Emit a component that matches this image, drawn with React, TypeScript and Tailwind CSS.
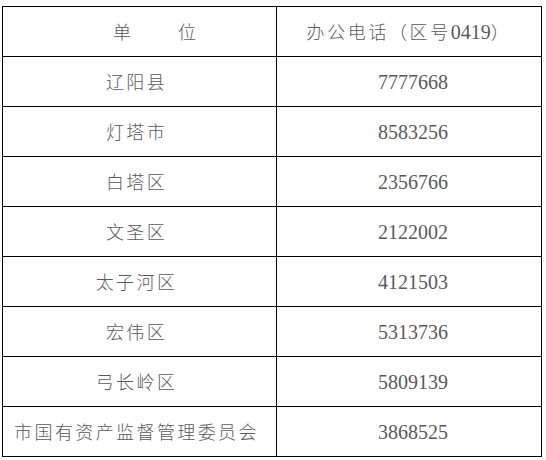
import React from "react";

const rows: [string, string][] = [
  ["辽阳县", "7777668"],
  ["灯塔市", "8583256"],
  ["白塔区", "2356766"],
  ["文圣区", "2122002"],
  ["太子河区", "4121503"],
  ["宏伟区", "5313736"],
  ["弓长岭区", "5809139"],
  ["市国有资产监督管理委员会", "3868525"],
];

const cjk = "font-['Noto_Sans_CJK_SC',sans-serif]";
const num = "font-['Liberation_Serif','Noto_Sans_CJK_SC',serif]";

export default function App() {
  return (
    <div className="w-[546px] h-[460px] bg-white pt-[6px] pl-[2px]">
      <table className="border-collapse text-[#5a5a5a]">
        <tbody>
          <tr className="h-[50px]">
            <td className={`w-[274px] border border-black text-center text-[18px] font-light ${cjk}`}>
              <span className="inline-flex gap-[47px] pl-[30px]">
                <span>单</span>
                <span>位</span>
              </span>
            </td>
            <td className={`w-[265px] border border-black text-center text-[18px] font-light tracking-[2.6px] ${cjk}`}>
              办公电话（区号<span className={`${num} text-[20px] tracking-normal`}>0419</span>）
            </td>
          </tr>
          {rows.map(([name, phone]) => (
            <tr key={name} className="h-[50px]">
              <td className={`border border-black text-center text-[18px] font-light tracking-[2.4px] pr-[6px] ${cjk}`}>
                {name}
              </td>
              <td className={`border border-black text-center text-[20px] pl-[8px] ${num}`}>
                {phone}
              </td>
            </tr>
          ))}
        </tbody>
      </table>
    </div>
  );
}
